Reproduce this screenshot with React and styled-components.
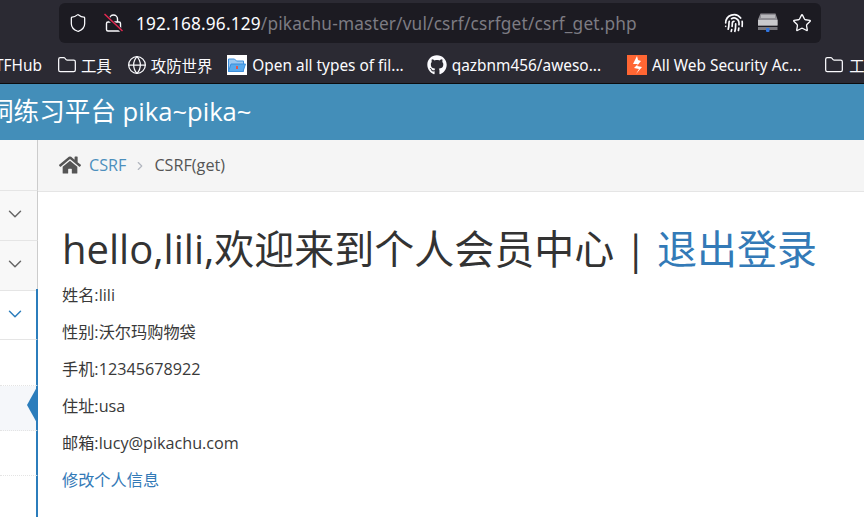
import React from "react";
import styled, { createGlobalStyle } from "styled-components";
import { FaGithub, FaHome } from "react-icons/fa";
import { Shield, Star, Folder, Globe, ChevronDown, ChevronRight, Fingerprint } from "lucide-react";

const Global = createGlobalStyle`
  html, body { margin: 0; padding: 0; background: #fff; }
  #root { width: 864px; height: 517px; overflow: hidden; }
  * { box-sizing: border-box; }
`;
const Page = styled.div`
  width: 864px; height: 517px; display: flex; flex-direction: column; overflow: hidden;
  font-family: "Open Sans", "Noto Sans CJK SC", sans-serif; color: #393939;
`;
const Toolbar = styled.div`
  height: 47px; flex: none; background: #2b2a33; padding: 3px 43px 4px 59px; display: flex;
`;
const UrlBar = styled.div`
  flex: 1; background: #1c1b22; border-radius: 6px; display: flex; align-items: center; padding: 0 9px 0 9px; color: #fbfbfe;
`;
const LockBox = styled.span`
  display: flex; margin-left: 16px; margin-right: 12px;
`;
const Url = styled.div`
  flex: 1; font-family: "Noto Sans", sans-serif; font-size: 17.25px; white-space: nowrap; color: #fbfbfe;
  letter-spacing: 0.01em;
  span { color: #7d7c83; }
`;
const Actions = styled.div`
  display: flex; align-items: center; gap: 13px;
`;
const Bookmarks = styled.div`
  height: 37px; flex: none; background: #2b2a33; border-bottom: 1px solid #0c0c0d; display: flex; align-items: center;
  overflow: hidden; white-space: nowrap; color: #fbfbfe;
  font-family: "Noto Sans", "Noto Sans CJK SC", sans-serif; font-size: 15.4px;
`;
const Mark = styled.div`
  display: flex; align-items: center; gap: ${p => p.$inner ?? 5}px; flex: none; margin-left: ${p => p.$gap ?? 16}px;
  letter-spacing: ${p => p.$track ?? 0}px;
`;
const FileIcon = styled.span`
  width: 20px; height: 20px; background: #fff; display: flex; align-items: center; justify-content: center; flex: none;
`;
const Header = styled.header`
  height: 56px; flex: none; background: #438eb9; color: #fff; font-size: 25.6px; display: flex; align-items: center;
  white-space: nowrap; overflow: hidden; padding-bottom: 4px;
  span { margin-left: -12px; }
`;
const Body = styled.div`
  flex: 1; display: flex; min-height: 0;
`;
const Sidebar = styled.aside`
  width: 38px; flex: none; background: #fff; display: flex; flex-direction: column; position: relative;
`;
const SideRow = styled.div`
  height: ${p => p.$h}px; flex: none; background: ${p => p.$bg || "#f8f8f8"};
  border-right: ${p => p.$active ? "2px solid #2b7dbc" : "1px solid #ccc"};
  border-bottom: 1px ${p => p.$dotted ? "dotted #e4e4e4" : "solid #e5e5e5"};
  display: flex; align-items: center; color: ${p => p.$active ? "#2b7dbc" : "#666"}; padding: 0 0 3px 4px;
`;
const SideFill = styled.div`
  flex: 1; background: #fff; border-right: 2px solid #2b7dbc;
`;
const BlueCap = styled.div`
  position: absolute; left: 36px; top: 149px; width: 2px; height: 3px; background: #2b7dbc;
`;
const Pointer = styled.div`
  position: absolute; left: 27px; top: 247px; width: 0; height: 0;
  border-style: solid; border-width: 18px 10px 18px 0; border-color: transparent #2b7dbc transparent transparent;
`;
const Main = styled.main`
  flex: 1; min-width: 0; display: flex; flex-direction: column; background: #fff;
`;
const Crumbs = styled.nav`
  height: 52px; flex: none; background: #f5f5f5; border-bottom: 1px solid #e5e5e5; display: flex; align-items: center;
  padding: 0 0 1px 21px; font-size: 16.2px; color: #555;
`;
const CrumbLink = styled.a`
  color: #4c8fbd; margin-left: 8px;
`;
const Sep = styled.span`
  display: flex; color: #b2b6bf; margin: 2px 7px 0 7px;
`;
const Content = styled.div`
  padding: 29px 0 0 24px; font-size: 16.2px; line-height: 20px;
`;
const Title = styled.h1`
  margin: 0 0 8px; font-size: 40px; font-weight: 400; line-height: 56px; white-space: nowrap; color: #333;
  a { color: #337ab7; }
`;
const Line = styled.p`
  margin: 0 0 17px; color: #393939;
`;
const EditLink = styled.a`
  color: #337ab7;
`;

const BrokenLock = () => (
  <svg width="20" height="20" viewBox="0 0 20 20" fill="none" stroke="#fbfbfe" strokeWidth="1.4">
    <rect x="2.5" y="9" width="14" height="9" rx="1.5" />
    <path d="M5.5 9V6a4 4 0 0 1 8 0v3" />
    <path d="M1 2l17 16" stroke="#1c1b22" strokeWidth="3.5" />
    <path d="M0.5 1l18 17" stroke="#e22850" strokeWidth="1.5" />
  </svg>
);
const Drive = () => (
  <svg width="22" height="22" viewBox="0 0 22 22">
    <path d="M3.5 1.5h15l2 6v6H1v-6z" fill="#8f8e94" />
    <rect x="4" y="3" width="14" height="3" fill="#b8b8bc" />
    <rect x="1" y="8" width="19.5" height="5.5" fill="#c9c9cc" />
    <rect x="1" y="15" width="19.5" height="3" fill="#77767c" />
    <rect x="9" y="16" width="3.5" height="4" rx="1" fill="#2f74e0" />
  </svg>
);
const FileGlyph = () => (
  <svg width="18" height="16" viewBox="0 0 18 16">
    <path d="M0.5 2h6l2 2h7v10.5h-15z" fill="#9cc8ef" stroke="#3d8fdc" />
    <path d="M3 7h14.5l-2.5 7.5H0.5z" fill="#59a9ec" stroke="#3d8fdc" />
    <rect x="8" y="9" width="2" height="3" fill="#e2574c" />
  </svg>
);
const Bolt = () => (
  <svg width="20" height="20" viewBox="0 0 20 20">
    <rect width="20" height="20" fill="#ff6633" />
    <path d="M10 1L6 9h5l-4 4 5 1-3 5 6-7-5-1 4-5-3-1z" fill="#fff" />
  </svg>
);

export default function App() {
  return (
    <Page>
      <Global />
      <Toolbar>
        <UrlBar>
          <Shield size={20} strokeWidth={1.5} />
          <LockBox><BrokenLock /></LockBox>
          <Url>192.168.96.129<span>/pikachu-master/vul/csrf/csrfget/csrf_get.php</span></Url>
          <Actions>
            <Fingerprint size={20} strokeWidth={2} />
            <Drive />
            <Star size={20} strokeWidth={1.6} />
          </Actions>
        </UrlBar>
      </Toolbar>
      <Bookmarks>
        <Mark $gap={-5}>TFHub</Mark>
        <Mark $gap={15} $inner={4}><Folder size={20} strokeWidth={1.5} />工具</Mark>
        <Mark $gap={15} $inner={4}><Globe size={20} strokeWidth={1.5} />攻防世界</Mark>
        <Mark $gap={15}><FileIcon><FileGlyph /></FileIcon>Open all types of fil...</Mark>
        <Mark $gap={23}><FaGithub size={20} />qazbnm456/aweso...</Mark>
        <Mark $gap={26}><Bolt />All Web Security Ac...</Mark>
        <Mark $gap={23} $track={0}><Folder size={20} strokeWidth={1.5} />工具</Mark>
      </Bookmarks>
      <Header><span>洞练习平台 pika~pika~</span></Header>
      <Body>
        <Sidebar>
          <SideRow $h={51} />
          <SideRow $h={50}><ChevronDown size={22} strokeWidth={1.6} /></SideRow>
          <SideRow $h={50}><ChevronDown size={22} strokeWidth={1.6} /></SideRow>
          <SideRow $h={49} $bg="#fff" $active><ChevronDown size={22} strokeWidth={1.6} /></SideRow>
          <SideRow $h={46} $bg="#fff" $active $dotted />
          <SideRow $h={45} $bg="#f5f7fa" $active $dotted />
          <SideRow $h={45} $bg="#fff" $active $dotted />
          <SideFill />
          <BlueCap />
          <Pointer />
        </Sidebar>
        <Main>
          <Crumbs>
            <FaHome size={22} color="#555" />
            <CrumbLink>CSRF</CrumbLink>
            <Sep><ChevronRight size={14} /></Sep>
            CSRF(get)
          </Crumbs>
          <Content>
            <Title>hello,lili,欢迎来到个人会员中心 | <a>退出登录</a></Title>
            <Line>姓名:lili</Line>
            <Line>性别:沃尔玛购物袋</Line>
            <Line>手机:12345678922</Line>
            <Line>住址:usa</Line>
            <Line>邮箱:lucy@pikachu.com</Line>
            <EditLink>修改个人信息</EditLink>
          </Content>
        </Main>
      </Body>
    </Page>
  );
}
